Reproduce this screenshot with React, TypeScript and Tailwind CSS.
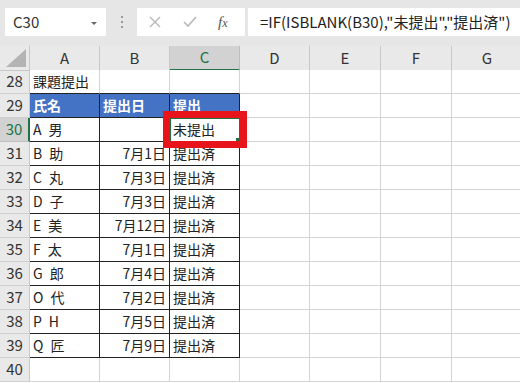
import React from "react";

const FONT = { fontFamily: '"Noto Sans CJK JP", "Noto Sans", sans-serif' };

const COLS = ["A", "B", "C", "D", "E", "F", "G"];

type Row = { n: number; a?: string; b?: string; c?: string };

// en space between initial and name, as in the sheet
const rows: Row[] = [
  { n: 28, a: "課題提出" },
  { n: 29, a: "氏名", b: "提出日", c: "提出" },
  { n: 30, a: "A\u2002男", c: "未提出" },
  { n: 31, a: "B\u2002助", b: "7月1日", c: "提出済" },
  { n: 32, a: "C\u2002丸", b: "7月3日", c: "提出済" },
  { n: 33, a: "D\u2002子", b: "7月3日", c: "提出済" },
  { n: 34, a: "E\u2002美", b: "7月12日", c: "提出済" },
  { n: 35, a: "F\u2002太", b: "7月1日", c: "提出済" },
  { n: 36, a: "G\u2002郎", b: "7月4日", c: "提出済" },
  { n: 37, a: "O\u2002代", b: "7月2日", c: "提出済" },
  { n: 38, a: "P\u2002H", b: "7月5日", c: "提出済" },
  { n: 39, a: "Q\u2002匠", b: "7月9日", c: "提出済" },
  { n: 40 },
];

const grid = "grid grid-cols-[30px_70px_70px_70px_70px_71px_71px_71px]";

function cellClass(n: number, col: number) {
  const inTable = n >= 29 && n <= 39 && col <= 2;
  const right = inTable ? "border-r-[#222]" : "border-r-[#d4d4d4]";
  let bottom = "border-b-[#d4d4d4]";
  if ((n === 28 && col <= 2) || inTable) bottom = "border-b-[#222]";
  const bg = n === 29 && col <= 2 ? "bg-[#4472c4] text-white font-bold" : "bg-white text-[#222]";
  return `h-6 border-r border-b ${right} ${bottom} ${bg} px-[3px] flex items-center text-[14px] whitespace-nowrap`;
}

export default function App() {
  return (
    <div className="relative w-[520px] h-[383px] overflow-hidden bg-white" style={FONT}>
      {/* formula bar */}
      <div className="h-[46px] bg-[#e6e6e6] flex items-start pt-2 pl-[5px]">
        <div className="w-[101px] h-7 bg-white flex items-center justify-between pl-2 pr-2 text-[15px] text-[#333]">
          <span>C30</span>
          <svg width="8" height="5" viewBox="0 0 8 5" className="mt-0.5">
            <path d="M1 1 L4 4 L7 1 Z" fill="#666" />
          </svg>
        </div>
        <div className="w-[31px] h-7 flex flex-col items-center justify-center gap-[3px]">
          <span className="w-[2px] h-[2px] bg-[#999]" />
          <span className="w-[2px] h-[2px] bg-[#999]" />
          <span className="w-[2px] h-[2px] bg-[#999]" />
        </div>
        <div className="w-[108px] h-7 bg-white flex items-center">
          <svg width="14" height="14" viewBox="0 0 14 14" className="ml-[11px]">
            <path d="M2 2 L12 12 M12 2 L2 12" stroke="#b8b8b8" strokeWidth="1.4" />
          </svg>
          <svg width="16" height="14" viewBox="0 0 16 14" className="ml-[20px]">
            <path d="M2 7 L6 11 L14 2" stroke="#b8b8b8" strokeWidth="1.6" fill="none" />
          </svg>
          <span className="ml-[20px] text-[15px] italic text-[#555]" style={{ fontFamily: '"Liberation Serif", serif' }}>
            f<span className="text-[12px]">x</span>
          </span>
        </div>
        <div className="ml-[3px] flex-1 h-7 bg-white flex items-center pl-3 text-[15px] text-[#222] whitespace-nowrap">
          =IF(ISBLANK(B30),"未提出","提出済")
        </div>
      </div>

      {/* column headers */}
      <div className={`${grid} h-6 bg-[#e9e9e9]`}>
        <div className="relative border-r border-b border-[#c8c8c8]">
          <svg width="20" height="18" viewBox="0 0 20 18" className="absolute right-[3px] bottom-[3px]">
            <path d="M20 0 L20 18 L0 18 Z" fill="#b4b4b4" />
          </svg>
        </div>
        {COLS.map((c) => (
          <div
            key={c}
            className={`flex items-center justify-center text-[15px] border-r ${
              c === "C"
                ? "bg-[#d2d2d2] text-[#217346] border-b-2 border-b-[#217346] border-r-[#bdbdbd]"
                : "text-[#333] border-b border-[#c8c8c8]"
            }`}
          >
            {c}
          </div>
        ))}
      </div>

      {/* rows */}
      {rows.map((r) => (
        <div key={r.n} className={grid}>
          <div
            className={`h-6 flex items-center justify-center text-[15px] border-b ${
              r.n === 30
                ? "bg-[#d2d2d2] text-[#217346] border-r-2 border-r-[#217346] border-b-[#bdbdbd]"
                : "bg-[#e9e9e9] text-[#333] border-r border-r-[#c8c8c8] border-b-[#d0d0d0]"
            }`}
          >
            {r.n}
          </div>
          <div className={cellClass(r.n, 0)}>{r.a}</div>
          <div className={`${cellClass(r.n, 1)} ${r.n === 29 ? "" : "justify-end"}`}>{r.b}</div>
          <div className={`relative ${cellClass(r.n, 2)} ${r.n === 30 ? "outline outline-1 outline-[#217346] -outline-offset-1" : ""}`}>
            {r.c}
            {r.n === 30 && <span className="absolute right-0 bottom-0 w-[3px] h-[3px] bg-[#217346]" />}
          </div>
          {[3, 4, 5, 6].map((i) => (
            <div key={i} className="h-6 border-r border-b border-[#d4d4d4] bg-white" />
          ))}
        </div>
      ))}

      {/* red highlight box around C30 */}
      <div className="absolute left-[163px] top-[111px] w-[84px] h-[37px] border-[7px] border-[#e8141c]" />
    </div>
  );
}
